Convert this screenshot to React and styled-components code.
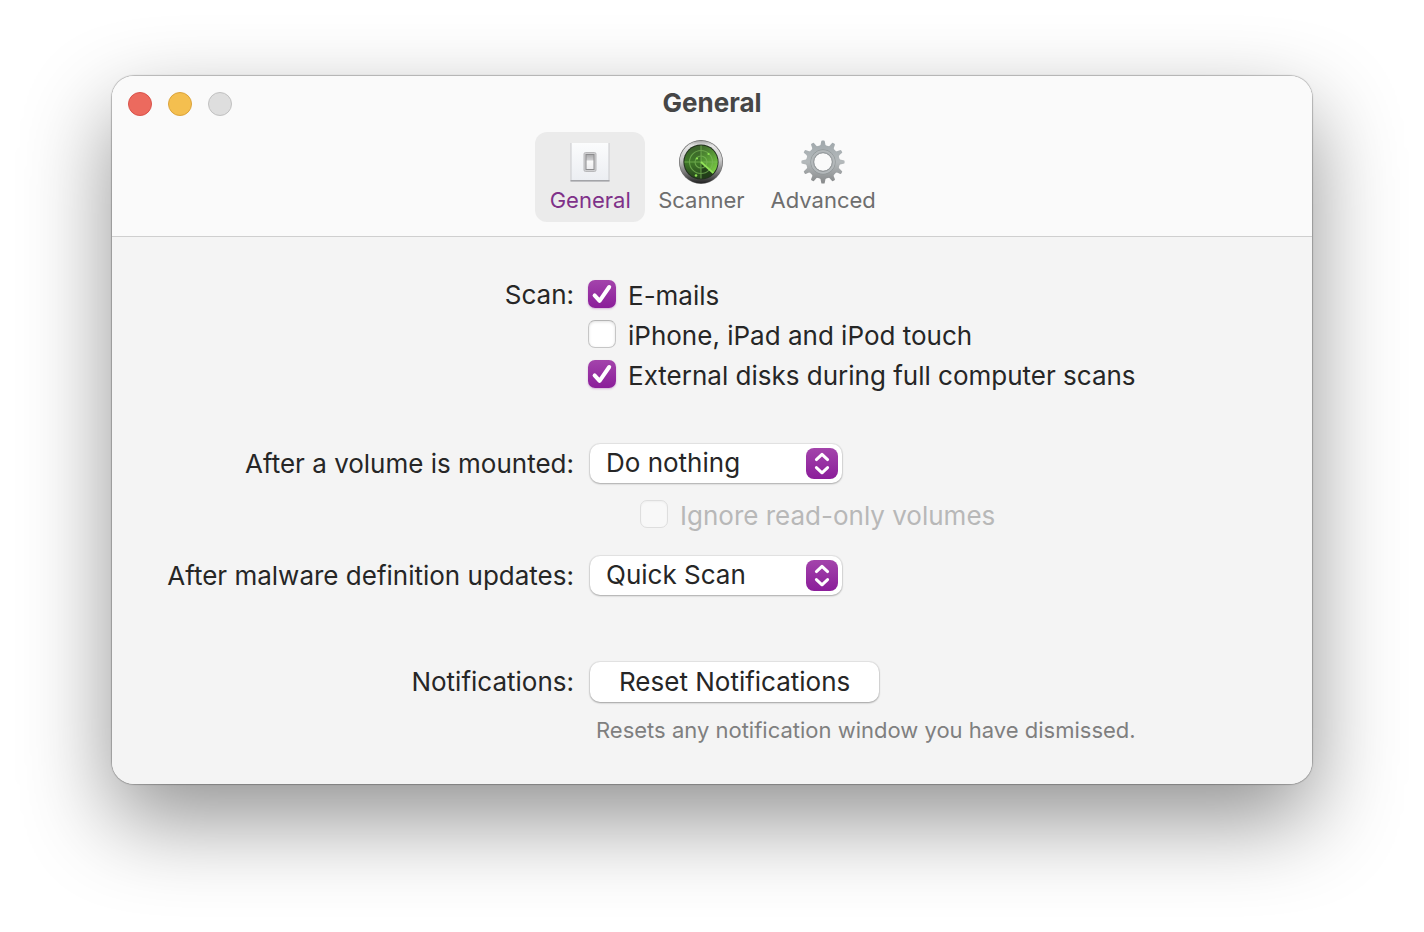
import React, { useState } from 'react';
import styled, { createGlobalStyle, css } from 'styled-components';

const GlobalStyle = createGlobalStyle`
  * {
    box-sizing: border-box;
  }
  body {
    margin: 0;
    background: #fff;
    color: #262626;
    font-family: Inter, 'Liberation Sans', sans-serif;
    font-size: 26px;
  }
  button,
  select,
  input {
    margin: 0;
    color: inherit;
    font: inherit;
  }
`;

const Desktop = styled.main`
  overflow: hidden;
  padding: 76px 112px 148px;
`;

const WindowFrame = styled.section`
  overflow: hidden;
  border-radius: 22px;
  background: #f4f4f4;
`;
const WindowShadow = styled.div`
  border-radius: 22px;
  box-shadow: 0 0 1px 1px rgba(0, 0, 0, 0.24), 0 36px 88px rgba(0, 0, 0, 0.43);
`;

const Header = styled.header`
  padding-bottom: 14px;
  border-bottom: 1px solid #cfcfcf;
  background: #fafafa;
`;
const TitleBar = styled.div`
  display: grid;
  grid-template-columns: 1fr auto 1fr;
  align-items: center;
  height: 56px;
  padding: 0 16px;
`;
const Lights = styled.div`
  display: flex;
  gap: 16px;
`;
const Light = styled.button`
  width: 24px;
  height: 24px;
  padding: 0;
  border: 1px solid ${props => props.$edge};
  border-radius: 50%;
  background: ${props => props.$fill};
`;
const Title = styled.h1`
  margin: 0;
  padding-bottom: 2px;
  color: #464646;
  font-size: 26px;
  font-weight: 700;
  line-height: 32px;
`;

const Toolbar = styled.nav`
  display: flex;
  justify-content: center;
`;
const Tab = styled.button`
  display: flex;
  flex-direction: column;
  align-items: center;
  min-width: 110px;
  height: 90px;
  padding: 8px 13px 0;
  border: 0;
  border-radius: 12px;
  background: none;
  color: #6e6e6e;
  font-size: 22px;
  line-height: 32px;
  ${props =>
    props.$active &&
    css`
      background: #ebebeb;
      color: #7f3189;
    `}
`;
const TabIcon = styled.svg`
  flex-shrink: 0;
  width: 44px;
  height: 44px;
`;

const Form = styled.form`
  display: grid;
  grid-template-columns: 38.5% 1fr;
  column-gap: 14px;
  padding: 43px 0 40px;
`;
const Caption = styled.div`
  line-height: ${props => props.$lineHeight || 40}px;
  text-align: right;
`;
const Field = styled.div`
  display: flex;
  flex-direction: column;
  align-items: flex-start;
  gap: ${props => props.$gap}px;
  margin-bottom: ${props => props.$space || 0}px;
`;

const CheckLabel = styled.label`
  display: flex;
  align-items: flex-start;
  gap: 12px;
  margin-left: ${props => (props.$nested ? 52 : 0)}px;
  line-height: 32px;
  color: ${props => (props.$nested ? '#b8b8b8' : 'inherit')};
`;
const CheckBox = styled.span`
  position: relative;
  width: 28px;
  height: 28px;
`;
const CheckInput = styled.input`
  display: block;
  width: 28px;
  height: 28px;
  border: 1px solid #c6c6c6;
  border-top-color: #b4b4b4;
  border-radius: 7px;
  background: #fff;
  box-shadow: inset 0 1px 3px rgba(0, 0, 0, 0.12);
  appearance: none;

  &:checked {
    border: 0;
    background: linear-gradient(#a344ab, #8b1d9a);
    box-shadow: 0 1px 2px rgba(139, 29, 154, 0.3);
  }
  &:disabled {
    border-color: #dedede;
    background: #f8f8f8;
    box-shadow: inset 0 1px 2px rgba(0, 0, 0, 0.04);
  }
`;
const CheckMark = styled.svg`
  position: absolute;
  top: 0;
  left: 0;
  pointer-events: none;
`;

const PopUp = styled.div`
  position: relative;
  width: 252px;
  margin-left: 2px;
`;
const PopUpSelect = styled.select`
  display: block;
  width: 100%;
  height: 39px;
  padding: 0 44px 3px 16px;
  border: 0;
  border-radius: 10px;
  background: #fff;
  box-shadow: 0 0 1px 1px rgba(0, 0, 0, 0.07), 0 1px 2px rgba(0, 0, 0, 0.25);
  appearance: none;
`;
const PopUpArrows = styled.svg`
  position: absolute;
  top: 4px;
  right: 4px;
  border-radius: 8px;
  background: linear-gradient(#a344ab, #8b1d9a);
  pointer-events: none;
`;

const PushButton = styled.button`
  height: 40px;
  margin-left: 2px;
  padding: 0 29px 2px;
  border: 0;
  border-radius: 10px;
  background: #fff;
  box-shadow: 0 0 1px 1px rgba(0, 0, 0, 0.07), 0 1px 2px rgba(0, 0, 0, 0.3);
`;
const Hint = styled.p`
  margin: 0 0 0 8px;
  color: #7f7f7f;
  font-size: 22px;
  line-height: 28px;
`;

const SwitchIcon = () => (
  <TabIcon viewBox="0 0 44 44" aria-hidden="true">
    <defs>
      <linearGradient id="plate" x1="0" y1="0" x2="0" y2="1">
        <stop offset="0" stopColor="#fbfcfd" />
        <stop offset="1" stopColor="#eceef2" />
      </linearGradient>
      <linearGradient id="rocker" x1="0" y1="0" x2="0" y2="1">
        <stop offset="0" stopColor="#a9a9ab" />
        <stop offset="0.38" stopColor="#d0d0d2" />
        <stop offset="0.42" stopColor="#fafafa" />
        <stop offset="1" stopColor="#ececee" />
      </linearGradient>
    </defs>
    <rect x="2.5" y="3" width="39" height="38.5" fill="#c9cacd" />
    <rect x="2.5" y="40" width="39" height="1.5" fill="#a3a4a8" />
    <rect x="3.5" y="3" width="37" height="37" fill="url(#plate)" />
    <rect x="16" y="12.5" width="12" height="19" rx="1.5" fill="#cfcfd1" stroke="#b9b9bb" />
    <rect x="18" y="14.5" width="8" height="15" fill="url(#rocker)" stroke="#8c8c8e" />
  </TabIcon>
);

const RadarIcon = () => (
  <TabIcon viewBox="0 0 44 44" aria-hidden="true">
    <defs>
      <linearGradient id="bezel" x1="0" y1="0" x2="0" y2="1">
        <stop offset="0" stopColor="#a2a2a2" />
        <stop offset="0.12" stopColor="#e6e6e6" />
        <stop offset="0.45" stopColor="#c9c9c9" />
        <stop offset="0.75" stopColor="#777" />
        <stop offset="1" stopColor="#222" />
      </linearGradient>
      <linearGradient id="screen" x1="0" y1="0" x2="0" y2="1">
        <stop offset="0" stopColor="#3b5f2c" />
        <stop offset="0.5" stopColor="#3f7a28" />
        <stop offset="1" stopColor="#27431d" />
      </linearGradient>
      <linearGradient id="sweep" x1="0.2" y1="0" x2="0.8" y2="1">
        <stop offset="0" stopColor="#5da53a" stopOpacity="0.2" />
        <stop offset="1" stopColor="#7fd146" />
      </linearGradient>
    </defs>
    <circle cx="22" cy="22" r="22" fill="#6a6a6a" />
    <circle cx="22" cy="22" r="21.3" fill="url(#bezel)" />
    <circle cx="22" cy="22" r="17.6" fill="#22301e" />
    <circle cx="22" cy="22" r="16.6" fill="url(#screen)" />
    <path d="M22 22 L22 5.4 A16.6 16.6 0 0 1 34.5 33 Z" fill="url(#sweep)" />
    <path d="M22 22 L34.5 33 A16.6 16.6 0 0 1 22 38.6 Z" fill="#1f3a17" opacity="0.75" />
    <g fill="none" stroke="#7cba58" strokeWidth="1.1" opacity="0.7">
      <circle cx="22" cy="22" r="6" />
      <circle cx="22" cy="22" r="11.5" />
      <path d="M22 5.4 V38.6 M5.4 22 H38.6" />
    </g>
    <path d="M22 22 L34.3 33.2" stroke="#92e457" strokeWidth="1.8" />
    <g fill="#8ee450">
      <circle cx="29.5" cy="14" r="1.1" />
      <circle cx="18" cy="18.5" r="1.1" />
      <circle cx="17" cy="35.5" r="1.3" />
    </g>
  </TabIcon>
);

const TEETH = Array.from({ length: 12 }, (_, index) => index * 30);

const GearIcon = () => (
  <TabIcon viewBox="0 0 44 44" aria-hidden="true">
    <defs>
      <linearGradient id="metal" gradientUnits="userSpaceOnUse" x1="0" y1="0" x2="0" y2="44">
        <stop offset="0" stopColor="#9fa7ab" />
        <stop offset="0.5" stopColor="#b4b9bb" />
        <stop offset="1" stopColor="#868889" />
      </linearGradient>
      <mask id="gearShape">
        <g fill="#fff">
          <circle cx="22" cy="22" r="16.8" />
          {TEETH.map(angle => (
            <path
              key={angle}
              d="M18 7 Q20 5.5 20.2 1.6 Q20.3 0.4 21.2 0.4 H22.8 Q23.7 0.4 23.8 1.6 Q24 5.5 26 7 Z"
              transform={`rotate(${angle} 22 22)`}
            />
          ))}
        </g>
        <circle cx="22" cy="22" r="9" fill="#000" />
      </mask>
    </defs>
    <rect width="44" height="44" fill="url(#metal)" mask="url(#gearShape)" />
    <circle cx="22" cy="22" r="12.3" fill="none" stroke="#8f9597" strokeWidth="0.8" />
    <circle cx="22" cy="22" r="10.8" fill="none" stroke="#b3b8ba" strokeWidth="2" />
    <circle cx="22" cy="22" r="9.3" fill="none" stroke="#8a8f91" strokeWidth="0.9" />
  </TabIcon>
);

const TABS = [
  { name: 'General', Icon: SwitchIcon },
  { name: 'Scanner', Icon: RadarIcon },
  { name: 'Advanced', Icon: GearIcon },
];

const Check = ({ label, defaultChecked, nested }) => {
  const [checked, setChecked] = useState(Boolean(defaultChecked));
  return (
    <CheckLabel $nested={nested}>
      <CheckBox>
        <CheckInput type="checkbox" checked={checked} disabled={nested} onChange={() => setChecked(!checked)} />
        {checked && (
          <CheckMark width="28" height="28" viewBox="0 0 28 28" aria-hidden="true">
            <path
              d="M6.6 15.4 L11.6 20.8 L21.2 7"
              fill="none"
              stroke="#fff"
              strokeWidth="4"
              strokeLinecap="round"
              strokeLinejoin="round"
            />
          </CheckMark>
        )}
      </CheckBox>
      {label}
    </CheckLabel>
  );
};

const Choice = ({ id, options, initial }) => (
  <PopUp>
    <PopUpSelect id={id} defaultValue={initial}>
      {options.map(option => (
        <option key={option}>{option}</option>
      ))}
    </PopUpSelect>
    <PopUpArrows width="32" height="31" viewBox="0 0 32 31" aria-hidden="true">
      <path
        d="M10.4 11.6 L16 6.4 L21.6 11.6 M10.4 19.6 L16 24.8 L21.6 19.6"
        fill="none"
        stroke="#fff"
        strokeWidth="3"
        strokeLinecap="round"
        strokeLinejoin="round"
      />
    </PopUpArrows>
  </PopUp>
);

const App = () => {
  const [active, setActive] = useState('General');
  return (
    <Desktop>
      <GlobalStyle />
      <WindowShadow>
        <WindowFrame>
          <Header>
            <TitleBar>
              <Lights>
                <Light aria-label="Close" $fill="#ec6a5e" $edge="#d9524a" />
                <Light aria-label="Minimize" $fill="#f4bf4f" $edge="#dba33b" />
                <Light aria-label="Zoom" $fill="#dedede" $edge="#c0c0c0" disabled />
              </Lights>
              <Title>{active}</Title>
            </TitleBar>
            <Toolbar>
              {TABS.map(({ name, Icon }) => (
                <Tab key={name} type="button" $active={name === active} onClick={() => setActive(name)}>
                  <Icon />
                  {name}
                </Tab>
              ))}
            </Toolbar>
          </Header>
          <Form onSubmit={event => event.preventDefault()}>
            <Caption $lineHeight={30}>Scan:</Caption>
            <Field $gap={8} $space={52}>
              <Check label="E-mails" defaultChecked />
              <Check label="iPhone, iPad and iPod touch" />
              <Check label="External disks during full computer scans" defaultChecked />
            </Field>

            <Caption as="label" htmlFor="volume">
              After a volume is mounted:
            </Caption>
            <Field $gap={17} $space={24}>
              <Choice id="volume" options={['Do nothing', 'Quick Scan', 'Full Scan']} initial="Do nothing" />
              <Check label="Ignore read-only volumes" nested />
            </Field>

            <Caption as="label" htmlFor="updates">
              After malware definition updates:
            </Caption>
            <Field $space={67}>
              <Choice id="updates" options={['Do nothing', 'Quick Scan', 'Full Scan']} initial="Quick Scan" />
            </Field>

            <Caption>Notifications:</Caption>
            <Field $gap={14}>
              <PushButton type="button">Reset Notifications</PushButton>
              <Hint>Resets any notification window you have dismissed.</Hint>
            </Field>
          </Form>
        </WindowFrame>
      </WindowShadow>
    </Desktop>
  );
};

export default App;
